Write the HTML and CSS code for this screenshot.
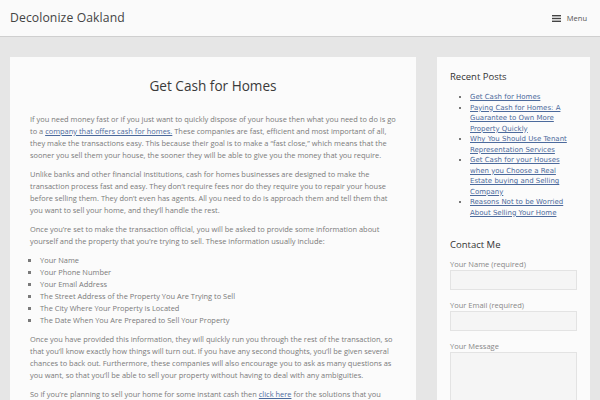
FILE: index.html
```html
<!DOCTYPE html>
<html>
<head>
<meta charset="utf-8">
<link rel="stylesheet" href="styles.css">
</head>
<body>
<header class="site-header">
  <div class="site-title">Decolonize Oakland</div>
  <div class="menu-toggle">
    <svg class="hamburger" width="9" height="7" viewBox="0 0 9 7"><rect x="0" y="0" width="9" height="1.4" fill="#444"/><rect x="0" y="2.8" width="9" height="1.4" fill="#444"/><rect x="0" y="5.6" width="9" height="1.4" fill="#444"/></svg>
    <span>Menu</span>
  </div>
</header>
<div class="wrap">
  <main class="content">
    <h1 class="entry-title">Get Cash for Homes</h1>
    <p>If you need money fast or if you just want to quickly dispose of your house then what you need to do is go to a <a href="#">company that offers cash for homes.</a> These companies are fast, efficient and most important of all, they make the transactions easy. This because their goal is to make a “fast close,” which means that the sooner you sell them your house, the sooner they will be able to give you the money that you require.</p>
    <p>Unlike banks and other financial institutions, cash for homes businesses are designed to make the transaction process fast and easy. They don’t require fees nor do they require you to repair your house before selling them. They don’t even has agents. All you need to do is approach them and tell them that you want to sell your home, and they’ll handle the rest.</p>
    <p>Once you’re set to make the transaction official, you will be asked to provide some information about yourself and the property that you’re trying to sell. These information usually include:</p>
    <ul>
      <li>Your Name</li>
      <li>Your Phone Number</li>
      <li>Your Email Address</li>
      <li>The Street Address of the Property You Are Trying to Sell</li>
      <li>The City Where Your Property is Located</li>
      <li>The Date When You Are Prepared to Sell Your Property</li>
    </ul>
    <p>Once you have provided this information, they will quickly run you through the rest of the transaction, so that you’ll know exactly how things will turn out. If you have any second thoughts, you’ll be given several chances to back out. Furthermore, these companies will also encourage you to ask as many questions as you want, so that you’ll be able to sell your property without having to deal with any ambiguities.</p>
    <p>So if you’re planning to sell your home for some instant cash then <a href="#">click here</a> for the solutions that you need.</p>
  </main>
  <aside class="sidebar">
    <section class="widget">
      <h2 class="widget-title">Recent Posts</h2>
      <ul class="recent">
        <li><a href="#">Get Cash for Homes</a></li>
        <li><a href="#">Paying Cash for Homes: A Guarantee to Own More Property Quickly</a></li>
        <li><a href="#">Why You Should Use Tenant Representation Services</a></li>
        <li><a href="#">Get Cash for your Houses when you Choose a Real Estate buying and Selling Company</a></li>
        <li><a href="#">Reasons Not to be Worried About Selling Your Home</a></li>
      </ul>
    </section>
    <section class="widget contact">
      <h2 class="widget-title">Contact Me</h2>
      <label class="field-label">Your Name (required)</label>
      <div class="input"></div>
      <label class="field-label">Your Email (required)</label>
      <div class="input"></div>
      <label class="field-label">Your Message</label>
      <div class="input textarea"></div>
    </section>
  </aside>
</div>
</body>
</html>
```
FILE: styles.css
```css
html, body {
  margin: 0;
  padding: 0;
}
body {
  background: #e6e6e6;
  font-family: "Open Sans", "DejaVu Sans", sans-serif;
  color: #7a7a7a;
  width: 600px;
  height: 400px;
  overflow: hidden;
}
.site-header {
  height: 36px;
  background: #fafafa;
  border-bottom: 1px solid #cfcfcf;
  display: flex;
  align-items: center;
  justify-content: space-between;
  padding: 0 13px 0 10px;
}
.site-title {
  font-size: 12.2px;
  color: #444;
  letter-spacing: 0.1px;
  margin-top: -1px;
}
.menu-toggle {
  display: flex;
  align-items: center;
  gap: 6px;
  font-size: 7.5px;
  color: #555;
}
.hamburger {
  display: block;
}
.wrap {
  display: flex;
  align-items: flex-start;
  padding: 20px 11px 0 10px;
  gap: 21px;
}
.content {
  width: 366px;
  flex: none;
  background: #fbfbfb;
  padding: 19px 20px 20px 20px;
  font-size: 7.45px;
  line-height: 12px;
}
.entry-title {
  font-weight: normal;
  font-size: 13.6px;
  color: #3a3a3a;
  text-align: center;
  margin: 0 0 17px 0;
  line-height: 20px;
}
.content p {
  margin: 0 0 7px 0;
}
.content ul {
  margin: 0 0 7px 0;
  padding-left: 10px;
  list-style: square;
}
.content a, .sidebar a {
  color: #4c6a9c;
  text-decoration: underline;
}
.sidebar {
  width: 127px;
  flex: none;
  background: #fbfbfb;
  padding: 13px 13px 20px 13px;
}
.widget-title {
  font-weight: normal;
  font-size: 9.5px;
  color: #333;
  margin: 0 0 8px 0;
  line-height: 14px;
}
.recent {
  margin: 0 0 20px 0;
  padding-left: 20px;
  font-family: "DejaVu Sans", sans-serif;
  font-size: 7px;
  line-height: 10.5px;
  list-style: square;
  color: #777;
}
.contact .widget-title {
  margin-bottom: 7px;
}
.field-label {
  display: block;
  font-size: 7.5px;
  line-height: 10px;
  color: #888;
  margin-bottom: 1px;
}
.input {
  height: 18px;
  background: #f5f5f5;
  border: 1px solid #e3e3e3;
  margin-bottom: 10px;
}
.textarea {
  height: 80px;
}
```
